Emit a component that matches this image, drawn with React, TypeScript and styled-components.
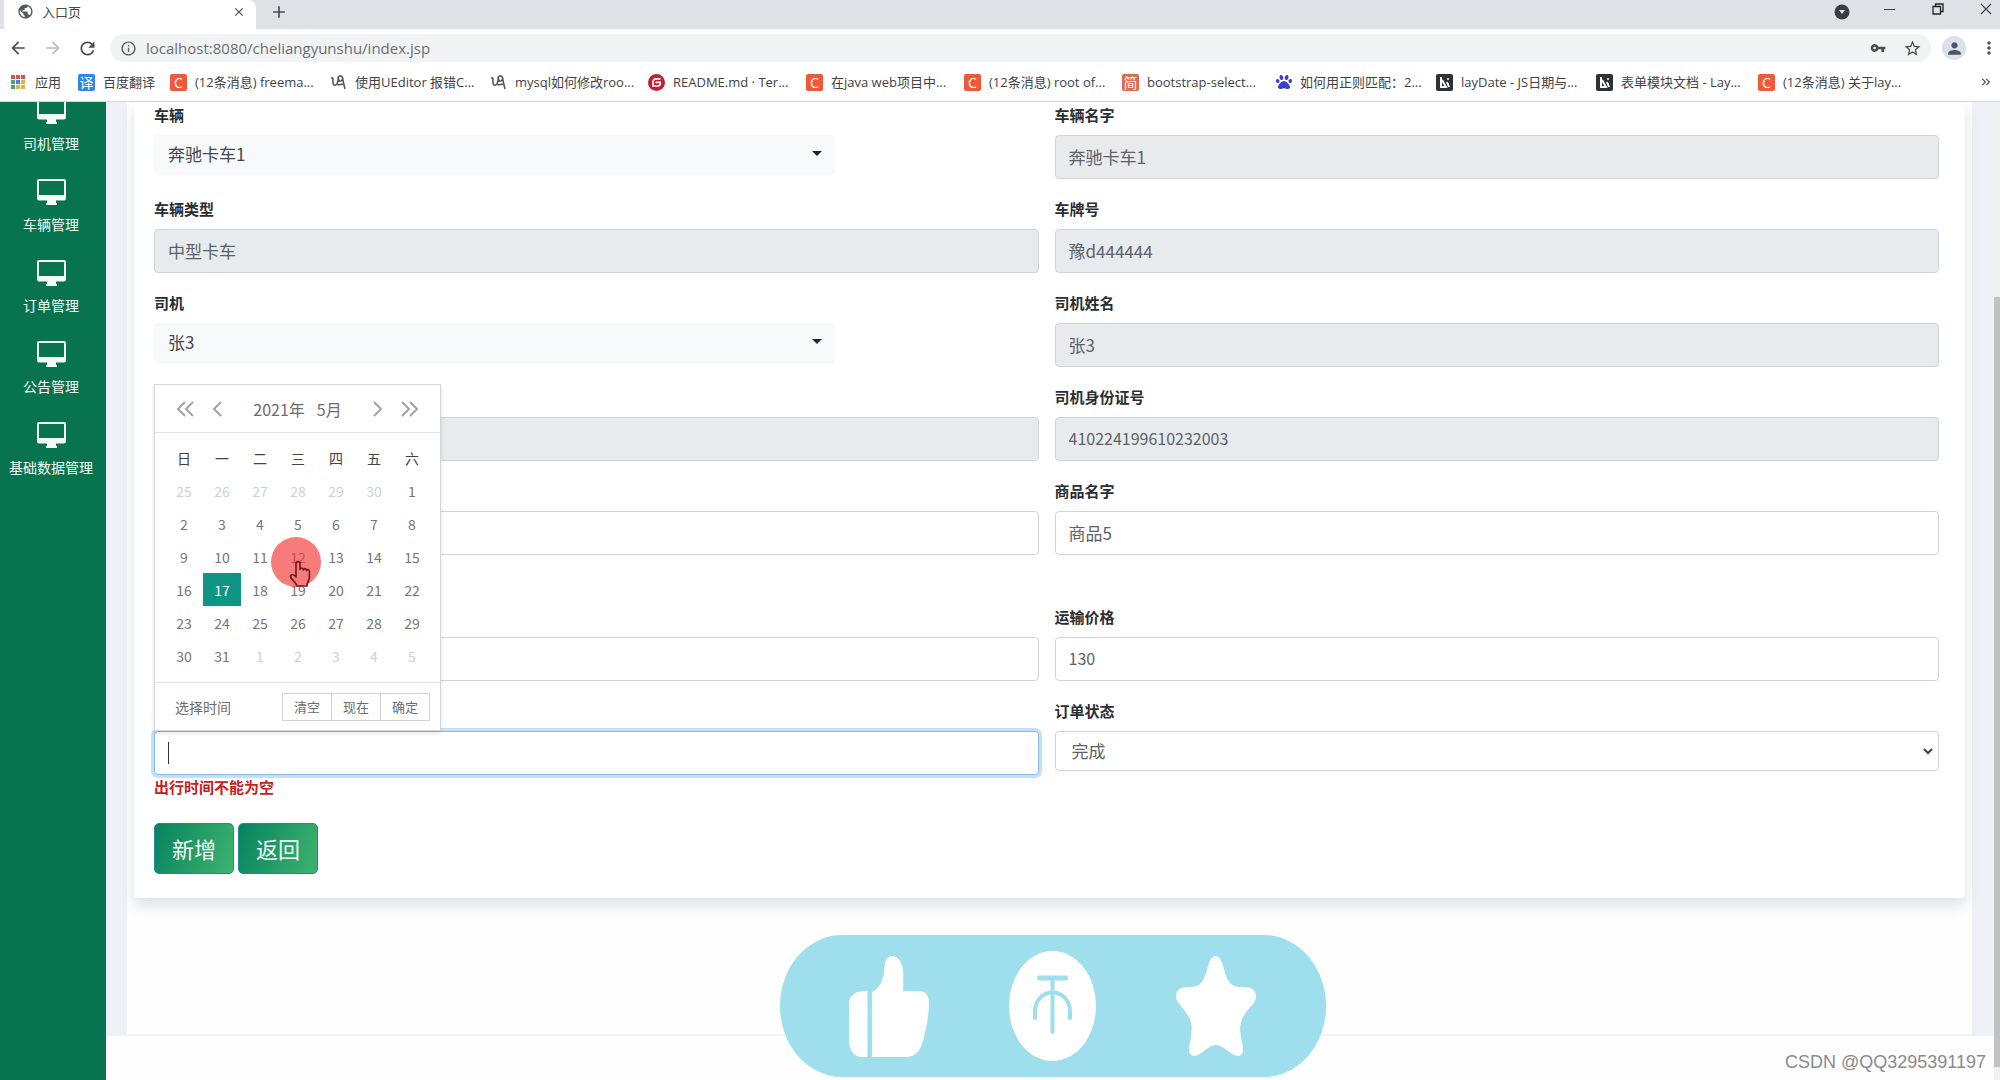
import React from "react";
import styled, { createGlobalStyle, css } from "styled-components";
import {
  MdPublic,
  MdClose,
  MdAdd,
  MdArrowBack,
  MdArrowForward,
  MdRefresh,
  MdInfoOutline,
  MdVpnKey,
  MdStarBorder,
  MdPerson,
  MdMoreVert,
  MdKeyboardDoubleArrowRight,
} from "react-icons/md";
import { FaPaw } from "react-icons/fa";

const uiFont = `"Open Sans", "Noto Sans CJK SC", sans-serif`;
const cjkFont = `"Noto Sans CJK SC", "Open Sans", sans-serif`;

const GlobalStyle = createGlobalStyle`
  *, *::before, *::after { box-sizing: border-box; }
  body { margin: 0; background: #fff; font-family: ${cjkFont}; color: #212529; }
  button, input, select { font-family: inherit; margin: 0; }
`;

const Page = styled.div`
  display: flex;
  flex-direction: column;
  height: 100vh;
  overflow: hidden;
`;

/* ---------- browser chrome ---------- */

const Chrome = styled.header`
  flex: none;
  font-family: ${uiFont};
  border-bottom: 1px solid #d5d7da;
  background: #fff;
`;

const TabStrip = styled.div`
  display: flex;
  align-items: stretch;
  height: 29px;
  padding-left: 4px;
  background: #dee1e6;
`;

const Tab = styled.div`
  display: flex;
  align-items: center;
  width: 252px;
  padding: 0 10px 6px 13px;
  gap: 8px;
  background: #fff;
  border-radius: 0 8px 0 0;
  font-size: 13px;
  line-height: 20px;
  color: #45484c;
`;

const TabTitle = styled.span`
  flex: 1;
`;

const IconButton = styled.button<{ $w?: number; $color?: string }>`
  display: inline-flex;
  align-items: center;
  justify-content: center;
  flex: none;
  width: ${(p) => p.$w ?? 24}px;
  padding: 0;
  border: 0;
  background: none;
  color: ${(p) => p.$color ?? "#4a4d51"};
`;

const NewTab = styled(IconButton)`
  margin-left: 11px;
  padding-bottom: 6px;
`;

const WindowControls = styled.div`
  display: flex;
  gap: 20px;
  margin-left: auto;
  padding-bottom: 12px;
`;

const TabSearch = styled(IconButton)`
  padding-top: 6px;
`;

const Toolbar = styled.div`
  display: flex;
  align-items: center;
  height: 38px;
  padding-left: 1px;
  gap: 1px;
`;

const Omnibox = styled.div`
  display: flex;
  align-items: center;
  flex: 1;
  height: 28px;
  margin-left: 6px;
  padding: 0 3px 0 10px;
  border-radius: 14px;
  background: #f1f3f4;
  color: #5a5d61;
`;

const Address = styled.input`
  flex: 1;
  min-width: 0;
  margin-left: 9px;
  padding: 0;
  border: 0;
  background: none;
  font-size: 15px;
  color: #6b6e72;
  outline: none;
`;

const Avatar = styled.button`
  display: flex;
  align-items: center;
  justify-content: center;
  width: 24px;
  height: 24px;
  margin: 0 11px 0 10px;
  padding: 0;
  border: 0;
  border-radius: 50%;
  background: #dbe0ea;
  color: #4b566b;
`;

const Bookmarks = styled.nav`
  display: flex;
  align-items: center;
  height: 34px;
  padding: 0 7px 4px 10px;
`;

const Bookmark = styled.a<{ $w: number }>`
  display: flex;
  align-items: center;
  flex: none;
  gap: 8px;
  width: ${(p) => p.$w}px;
  font-size: 13px;
  line-height: 18px;
  white-space: nowrap;
  color: #3f4246;
  text-decoration: none;
`;

const More = styled(IconButton)`
  margin-left: auto;
`;

const Badge = styled.span<{ $bg: string }>`
  display: flex;
  align-items: center;
  justify-content: center;
  flex: none;
  width: 17px;
  height: 17px;
  border-radius: 2px;
  background: ${(p) => p.$bg};
  color: #fff;
  font-size: 14px;
  line-height: 17px;
`;

type Mark = { kind: string; text: string; w: number };

const marks: Mark[] = [
  { kind: "apps", text: "应用", w: 68 },
  { kind: "fanyi", text: "百度翻译", w: 92 },
  { kind: "csdn", text: "(12条消息) freema...", w: 160 },
  { kind: "u9", text: "使用UEditor 报错C...", w: 160 },
  { kind: "u9", text: "mysql如何修改roo...", w: 158 },
  { kind: "gitee", text: "README.md · Ter...", w: 158 },
  { kind: "csdn", text: "在java web项目中...", w: 158 },
  { kind: "csdn", text: "(12条消息) root of...", w: 158 },
  { kind: "jian", text: "bootstrap-select...", w: 154 },
  { kind: "baidu", text: "如何用正则匹配：2...", w: 160 },
  { kind: "layui", text: "layDate - JS日期与...", w: 160 },
  { kind: "layui", text: "表单模块文档 - Lay...", w: 162 },
  { kind: "csdn", text: "(12条消息) 关于lay...", w: 158 },
];

const appDots = ["#d9534a", "#d9534a", "#d9534a", "#4aa564", "#4285d8", "#e2b33c", "#4aa564", "#e2b33c", "#e2b33c"];

function MarkIcon({ kind }: { kind: string }) {
  switch (kind) {
    case "apps":
      return (
        <svg width="17" height="16" viewBox="0 0 17 16" aria-hidden="true">
          {appDots.map((c, i) => (
            <rect key={i} x={1 + (i % 3) * 5} y={1 + Math.floor(i / 3) * 5} width="4" height="4" fill={c} />
          ))}
        </svg>
      );
    case "fanyi":
      return <Badge $bg="#2b87e8">译</Badge>;
    case "csdn":
      return <Badge $bg="#f0583a">C</Badge>;
    case "gitee":
      return (
        <svg width="17" height="17" viewBox="0 0 17 17" aria-hidden="true">
          <circle cx="8.5" cy="8.5" r="8.5" fill="#c01f35" />
          <path d="M12.5 4.8H8a3 3 0 0 0-3 3V12h4.800a2.400 2.400 0 0 0 2.400-2.400V8.400H7.500" fill="none" stroke="#fff" strokeWidth="1.700" />
        </svg>
      );
    case "jian":
      return <Badge $bg="#d9694f">简</Badge>;
    case "baidu":
      return <FaPaw size={16} color="#3a3fd0" />;
    case "layui":
      return (
        <svg width="17" height="17" viewBox="0 0 17 17" aria-hidden="true">
          <rect width="17" height="17" rx="2" fill="#2f3136" />
          <path d="M5 3v10h5L6 6M11 8l2 5" fill="none" stroke="#fff" strokeWidth="2" />
          <circle cx="12" cy="5" r="1" fill="#fff" />
        </svg>
      );
    default:
      return (
        <svg width="17" height="17" viewBox="0 0 17 17" aria-hidden="true">
          <path
            d="M1 4c2-.5 2 .5 2 2v3c0 2 2 3 4 1 1-1.500 1.300-3.500 1-5.500C8 2.500 9.500 1.500 11 2c2 .7 2 4.500 0 5-1.500.3-3-1-2-2.500M12.500 3c.5 4 1.500 8 2.500 12M7.500 11l6-1"
            fill="none"
            stroke="#55585c"
            strokeWidth="1.600"
          />
        </svg>
      );
  }
}

/* ---------- application ---------- */

const Body = styled.div`
  display: flex;
  flex: 1;
  min-height: 0;
`;

const Sidebar = styled.nav`
  display: flex;
  flex-direction: column;
  flex: none;
  width: 106px;
  padding-right: 4px;
  overflow: hidden;
  background: #08744f;
`;

const MenuList = styled.ul`
  margin: -4px 0 0;
  padding: 0;
  list-style: none;
`;

const MenuLink = styled.a`
  display: flex;
  flex-direction: column;
  align-items: center;
  gap: 9px;
  height: 81px;
  font-size: 14px;
  line-height: 20px;
  white-space: nowrap;
  color: #f2faf6;
  text-decoration: none;
`;

const Main = styled.main`
  position: relative;
  display: flex;
  flex-direction: column;
  flex: 1;
  min-width: 0;
  background: #f0f1f6;
`;

const Panel = styled.section`
  flex: 1;
  margin: 0 28px 0 21px;
  border-bottom: 2px solid #f4f4f8;
  background: #fefefe;
`;

const Footer = styled.footer`
  height: 44px;
  background: #fefefe;
`;

const Watermark = styled.span`
  position: absolute;
  right: 14px;
  bottom: 6px;
  font-family: "Liberation Sans", Arial, sans-serif;
  font-size: 18px;
  line-height: 24px;
  color: #8b8b8b;
`;

const Card = styled.form`
  margin: 0 7px;
  padding: 3px 26px 24px 20px;
  border-radius: 0 0 4px 4px;
  background: #fff;
  box-shadow: 0 8px 14px rgba(50, 75, 115, 0.16);
`;

const Row = styled.div<{ $wide?: boolean }>`
  display: grid;
  grid-template-columns: 1fr 1fr;
  column-gap: 16px;
  margin-bottom: ${(p) => (p.$wide ? 52 : 20)}px;
`;

const Field = styled.div`
  position: relative;
  min-width: 0;
`;

const labelText = css`
  font-size: 15px;
  font-weight: 700;
  line-height: 20px;
`;

const Label = styled.label`
  ${labelText}
  display: block;
  height: 20px;
  margin-bottom: 10px;
  color: #2a2e32;
`;

const TextInput = styled.input<{ $numeric?: boolean; $focus?: boolean }>`
  display: block;
  width: 100%;
  height: 44px;
  padding: 0 13px 2px;
  border: 1px solid #d0d4d8;
  border-radius: 4px;
  background: #fff;
  font-size: ${(p) => (p.$numeric ? 16 : 17)}px;
  color: #5c6268;
  outline: none;
  &:disabled {
    background: #e8ebee;
    opacity: 1;
  }
  ${(p) =>
    p.$focus &&
    css`
      border-color: #86bdf0;
      box-shadow: 0 0 0 3px #c3dffa;
    `}
`;

const SelectBox = styled.div<{ $picker?: boolean }>`
  position: relative;
  width: ${(p) => (p.$picker ? "77%" : "100%")};
`;

const Select = styled.select<{ $picker?: boolean }>`
  appearance: none;
  display: block;
  width: 100%;
  height: 40px;
  padding: 0 16px 2px;
  border: 1px solid #cfd3d7;
  border-radius: 4px;
  background: #fff;
  font-size: 17px;
  color: #5c6268;
  ${(p) =>
    p.$picker &&
    css`
      padding: 0 13px 3px;
      border-color: #f8f9fb;
      background: #f8f9fb;
      color: #43484d;
    `}
`;

const Arrow = styled.svg<{ $right: number }>`
  position: absolute;
  top: 15px;
  right: ${(p) => p.$right}px;
  pointer-events: none;
`;

const Caret = styled.span`
  position: absolute;
  left: 14px;
  top: 41px;
  width: 1px;
  height: 22px;
  background: #333;
`;

const ErrorText = styled.p`
  ${labelText}
  margin: 2px 0 0;
  color: #c62020;
`;

const Actions = styled.div`
  display: flex;
  gap: 4px;
  margin-top: 26px;
`;

const ActionButton = styled.button`
  width: 80px;
  height: 51px;
  padding: 0 0 2px;
  border: 1px solid #23889c;
  border-radius: 5px;
  background: linear-gradient(110deg, #0a855f 5%, #3bb16f 95%);
  font-size: 22px;
  line-height: 30px;
  color: #f4fbf7;
`;

/* ---------- date picker ---------- */

const Picker = styled.div`
  position: absolute;
  left: 0;
  top: -317px;
  z-index: 2;
  width: 287px;
  border: 1px solid #d6d6d6;
  background: #fff;
  box-shadow: 0 2px 4px rgba(0, 0, 0, 0.12);
  color: #6d6d6d;
`;

const PickerHead = styled.div`
  display: flex;
  align-items: center;
  justify-content: space-between;
  height: 48px;
  padding: 0 20px;
  border-bottom: 1px solid #e4e4e4;
  font-size: 16px;
`;

const Arrows = styled.span`
  display: flex;
  gap: 12px;
`;

const PickerTitle = styled.span`
  display: flex;
  gap: 12px;
`;

const Calendar = styled.table`
  width: 266px;
  margin: 8px 9px 10px 10px;
  border-collapse: collapse;
  table-layout: fixed;
  font-size: 14px;
`;

const Weekday = styled.th`
  height: 33px;
  padding: 0;
  font-weight: 400;
  color: #444;
`;

const Day = styled.td<{ $state?: "off" | "on" }>`
  height: 33px;
  padding: 0;
  text-align: center;
  color: ${(p) => (p.$state === "off" ? "#d0d0d0" : p.$state === "on" ? "#fff" : "#757575")};
  background: ${(p) => (p.$state === "on" ? "#0e9584" : "transparent")};
`;

const PickerFoot = styled.div`
  display: flex;
  align-items: center;
  justify-content: space-between;
  height: 48px;
  padding: 0 10px 0 20px;
  border-top: 1px solid #e0e0e0;
`;

const FootButtons = styled.div`
  display: flex;
`;

const FootButton = styled.button<{ $plain?: boolean }>`
  padding: 0;
  border: 0;
  background: #fff;
  font-size: 14px;
  line-height: 20px;
  color: #6d6d6d;
  ${(p) =>
    !p.$plain &&
    css`
      width: 50px;
      height: 28px;
      font-size: 13px;
      border: 1px solid #d2d2d2;
      & + & {
        margin-left: -1px;
      }
    `}
`;

const Pointer = styled.svg`
  position: absolute;
  left: 116px;
  top: 152px;
  pointer-events: none;
`;

/* ---------- like bar and scrollbar ---------- */

const LikeBar = styled.div`
  position: absolute;
  left: 50%;
  bottom: 3px;
  z-index: 1;
  transform: translateX(-50%);
  display: flex;
  align-items: center;
  justify-content: center;
  gap: 80px;
  width: 546px;
  height: 142px;
  padding-right: 2px;
  border-radius: 62px / 71px;
  background: #9fdeec;
`;

const ScrollTrack = styled.div`
  position: absolute;
  top: 0;
  right: 0;
  bottom: 0;
  display: flex;
  flex-direction: column;
  width: 6px;
  padding: 195px 0 13px;
  background: #f1f1f1;
`;

const ScrollThumb = styled.div`
  flex: 1;
  background: #c1c1c1;
`;

const menu = ["司机管理", "车辆管理", "订单管理", "公告管理", "基础数据管理"];
const weekdays = ["日", "一", "二", "三", "四", "五", "六"];
const weeks = Array.from({ length: 6 }, (_, w) =>
  Array.from({ length: 7 }, (_, d) => new Date(2021, 3, 25 + w * 7 + d))
);

function Monitor() {
  return (
    <svg width="29" height="26" viewBox="0 0 29 26" aria-hidden="true">
      <path
        fillRule="evenodd"
        fill="#f2faf6"
        d="M2 0h25a2 2 0 0 1 2 2v17.500a2 2 0 0 1-2 2h-8V24h1v2H9v-2h1v-2.500H2a2 2 0 0 1-2-2V2a2 2 0 0 1 2-2Zm0 2v14h25V2Z"
      />
    </svg>
  );
}

function Chevrons({ double, right }: { double?: boolean; right?: boolean }) {
  const w = double ? 18 : 10;
  return (
    <svg width={w} height="18" viewBox={`0 0 ${w} 18`} aria-hidden="true">
      <g fill="none" stroke="#a2a2a2" strokeWidth="2" transform={right ? `translate(${w} 0) scale(-1 1)` : undefined}>
        <path d="M9 2 2 9l7 7" />
        {double && <path d="M17 2l-7 7 7 7" />}
      </g>
    </svg>
  );
}

function DatePicker() {
  return (
    <Picker>
      <PickerHead>
        <Arrows>
          <IconButton type="button" $w={20} aria-label="上一年"><Chevrons double /></IconButton>
          <IconButton type="button" $w={20} aria-label="上个月"><Chevrons /></IconButton>
        </Arrows>
        <PickerTitle>
          <span>2021年</span>
          <span>5月</span>
        </PickerTitle>
        <Arrows>
          <IconButton type="button" $w={20} aria-label="下个月"><Chevrons right /></IconButton>
          <IconButton type="button" $w={20} aria-label="下一年"><Chevrons double right /></IconButton>
        </Arrows>
      </PickerHead>
      <Calendar>
        <thead>
          <tr>
            {weekdays.map((d) => (
              <Weekday key={d} scope="col">{d}</Weekday>
            ))}
          </tr>
        </thead>
        <tbody>
          {weeks.map((week, i) => (
            <tr key={i}>
              {week.map((day) => (
                <Day
                  key={day.getTime()}
                  $state={day.getMonth() !== 4 ? "off" : day.getDate() === 17 ? "on" : undefined}
                >
                  {day.getDate()}
                </Day>
              ))}
            </tr>
          ))}
        </tbody>
      </Calendar>
      <PickerFoot>
        <FootButton type="button" $plain>选择时间</FootButton>
        <FootButtons>
          <FootButton type="button">清空</FootButton>
          <FootButton type="button">现在</FootButton>
          <FootButton type="button">确定</FootButton>
        </FootButtons>
      </PickerFoot>
      <Pointer width="50" height="52" viewBox="0 0 50 52" aria-hidden="true">
        <circle cx="25" cy="25" r="25" fill="rgba(244, 60, 60, 0.68)" />
        <path
          d="M25 38V26.500c0-2.600 4-2.600 4 0v6c0-2 3.400-2 3.400.4 0-1.800 3.200-1.600 3.200.6 0-1.600 2.800-1.200 2.800 1v6c0 3-2.400 4.500-2.400 8.500H26c-1-4-6-6.500-6.500-9.500-.2-2.300 3.500-2.500 5.500.5Z"
          fill="none"
          stroke="#741a24"
          strokeWidth="1.700"
          strokeLinejoin="round"
        />
      </Pointer>
    </Picker>
  );
}

type InputProps = { id: string; label?: string; hint?: string; value?: string; locked?: boolean; numeric?: boolean };

function InputField({ id, label, hint, value = "", locked, numeric }: InputProps) {
  return (
    <Field>
      <Label htmlFor={id}>{label}</Label>
      <TextInput id={id} defaultValue={value} disabled={locked} $numeric={numeric} aria-label={hint} />
    </Field>
  );
}

function PickerField({ id, label, value }: { id: string; label: string; value: string }) {
  return (
    <Field>
      <Label htmlFor={id}>{label}</Label>
      <SelectBox $picker>
        <Select id={id} $picker>
          <option>{value}</option>
        </Select>
        <Arrow $right={12} width="12" height="8" viewBox="0 0 12 8" aria-hidden="true">
          <path d="M1 1h10L6 6Z" fill="#212529" />
        </Arrow>
      </SelectBox>
    </Field>
  );
}

export default function App() {
  return (
    <Page>
      <GlobalStyle />
      <Chrome>
        <TabStrip>
          <Tab>
            <MdPublic size={17} color="#55585c" />
            <TabTitle>入口页</TabTitle>
            <IconButton $w={14} aria-label="关闭标签页"><MdClose size={14} /></IconButton>
          </Tab>
          <NewTab aria-label="新标签页"><MdAdd size={20} /></NewTab>
          <WindowControls>
            <TabSearch $w={28} aria-label="搜索标签页">
              <svg width="16" height="16" viewBox="0 0 16 16">
                <circle cx="8" cy="8" r="7.500" fill="#3a3d41" />
                <path d="M5 6h6l-3 4Z" fill="#dee1e6" />
              </svg>
            </TabSearch>
            <IconButton $w={28} aria-label="最小化">
              <svg width="12" height="12"><path d="M0 6.500h11" stroke="#444" /></svg>
            </IconButton>
            <IconButton $w={28} aria-label="还原">
              <svg width="12" height="12">
                <path d="M1 3.500h7.500v7.500H1ZM3.500 3.500V1H11v7.500H8.500" fill="none" stroke="#222" strokeWidth="1.300" />
              </svg>
            </IconButton>
            <IconButton $w={28} aria-label="关闭">
              <svg width="12" height="12"><path d="M1 1l10 10M11 1L1 11" stroke="#444" strokeWidth="1.200" /></svg>
            </IconButton>
          </WindowControls>
        </TabStrip>
        <Toolbar>
          <IconButton $w={34} aria-label="后退"><MdArrowBack size={20} /></IconButton>
          <IconButton $w={34} $color="#babcbe" aria-label="前进"><MdArrowForward size={20} /></IconButton>
          <IconButton $w={32} aria-label="刷新"><MdRefresh size={21} /></IconButton>
          <Omnibox>
            <MdInfoOutline size={17} />
            <Address aria-label="地址" defaultValue="localhost:8080/cheliangyunshu/index.jsp" />
            <IconButton $w={36} aria-label="密码"><MdVpnKey size={16} /></IconButton>
            <IconButton $w={32} aria-label="收藏"><MdStarBorder size={19} /></IconButton>
          </Omnibox>
          <Avatar aria-label="用户"><MdPerson size={19} /></Avatar>
          <IconButton $w={22} aria-label="菜单"><MdMoreVert size={20} /></IconButton>
        </Toolbar>
        <Bookmarks>
          {marks.map((m, i) => (
            <Bookmark key={i} href="#" $w={m.w}>
              <MarkIcon kind={m.kind} />
              {m.text}
            </Bookmark>
          ))}
          <More $w={14} aria-label="更多书签"><MdKeyboardDoubleArrowRight size={14} /></More>
        </Bookmarks>
      </Chrome>

      <Body>
        <Sidebar>
          <MenuList>
            {menu.map((m) => (
              <li key={m}>
                <MenuLink href="#">
                  <Monitor />
                  {m}
                </MenuLink>
              </li>
            ))}
          </MenuList>
        </Sidebar>

        <Main>
          <Panel>
            <Card onSubmit={(e) => e.preventDefault()}>
              <Row>
                <PickerField id="car" label="车辆" value="奔驰卡车1" />
                <InputField id="carName" label="车辆名字" value="奔驰卡车1" locked />
              </Row>
              <Row>
                <InputField id="carType" label="车辆类型" value="中型卡车" locked />
                <InputField id="plate" label="车牌号" value="豫d444444" locked />
              </Row>
              <Row>
                <PickerField id="driver" label="司机" value="张3" />
                <InputField id="driverName" label="司机姓名" value="张3" locked />
              </Row>
              <Row>
                <InputField id="driverPhone" hint="司机手机号" locked />
                <InputField id="driverId" label="司机身份证号" value="410224199610232003" locked numeric />
              </Row>
              <Row $wide>
                <InputField id="orderNo" hint="订单号" />
                <InputField id="goods" label="商品名字" value="商品5" />
              </Row>
              <Row>
                <InputField id="place" hint="运输地点" />
                <InputField id="price" label="运输价格" value="130" numeric />
              </Row>
              <Row>
                <Field>
                  <Label htmlFor="departAt" />
                  <TextInput id="departAt" aria-label="出行时间" $focus />
                  <Caret />
                  <DatePicker />
                  <ErrorText>出行时间不能为空</ErrorText>
                </Field>
                <Field>
                  <Label htmlFor="status">订单状态</Label>
                  <SelectBox>
                    <Select id="status">
                      <option>完成</option>
                    </Select>
                    <Arrow $right={5} width="12" height="10" viewBox="0 0 12 10" aria-hidden="true">
                      <path d="M2 3l4 4 4-4" fill="none" stroke="#3c3f43" strokeWidth="2" />
                    </Arrow>
                  </SelectBox>
                </Field>
              </Row>
              <Actions>
                <ActionButton type="submit">新增</ActionButton>
                <ActionButton type="button">返回</ActionButton>
              </Actions>
            </Card>
          </Panel>
          <Footer>
            <Watermark>CSDN @QQ3295391197</Watermark>
          </Footer>

          <LikeBar>
            <svg width="80" height="101" viewBox="0 0 208 304" preserveAspectRatio="none" fill="#fff" aria-hidden="true">
              <path d="M48 106H34C12 108 0 122 0 145V255C0 280 12 302 30 304H48Z" />
              <path d="M60 108C84 92 90 70 92 35C93 12 100 0 112 0C128 0 141 20 141 55V106H182C202 106 208 120 208 145C206 190 200 225 192 258C184 290 170 304 146 304H60Z" />
            </svg>
            <svg width="87" height="110" viewBox="0 0 87 110" aria-hidden="true">
              <ellipse cx="43.500" cy="55" rx="43.500" ry="55" fill="#fff" />
              <g fill="none" stroke="#9fdeec" strokeWidth="4" strokeLinecap="round">
                <path d="M30.500 27h26" strokeWidth="5" />
                <path d="M43.500 28v53M26 67v-6c0-12 8-19.500 17.500-19.500S61 49 61 61v6" />
              </g>
            </svg>
            <svg width="80" height="100" viewBox="0 0 207 300" preserveAspectRatio="none" fill="#fff" aria-hidden="true">
              <path d="M83 30Q90 0 102 0Q115 0 122 30Q130 75 145 86Q154 93 170 93H180Q207 95 207 122Q207 138 190 155Q168 185 166 212Q166 235 173 270Q176 300 160 300Q150 300 140 290Q115 266 103 266Q92 266 66 290Q56 300 48 300Q30 300 34 270Q42 235 40 205Q38 185 15 153Q0 135 0 122Q0 95 26 93H36Q54 93 62 84Q75 70 83 30Z" />
            </svg>
          </LikeBar>
          <ScrollTrack>
            <ScrollThumb />
          </ScrollTrack>
        </Main>
      </Body>
    </Page>
  );
}
